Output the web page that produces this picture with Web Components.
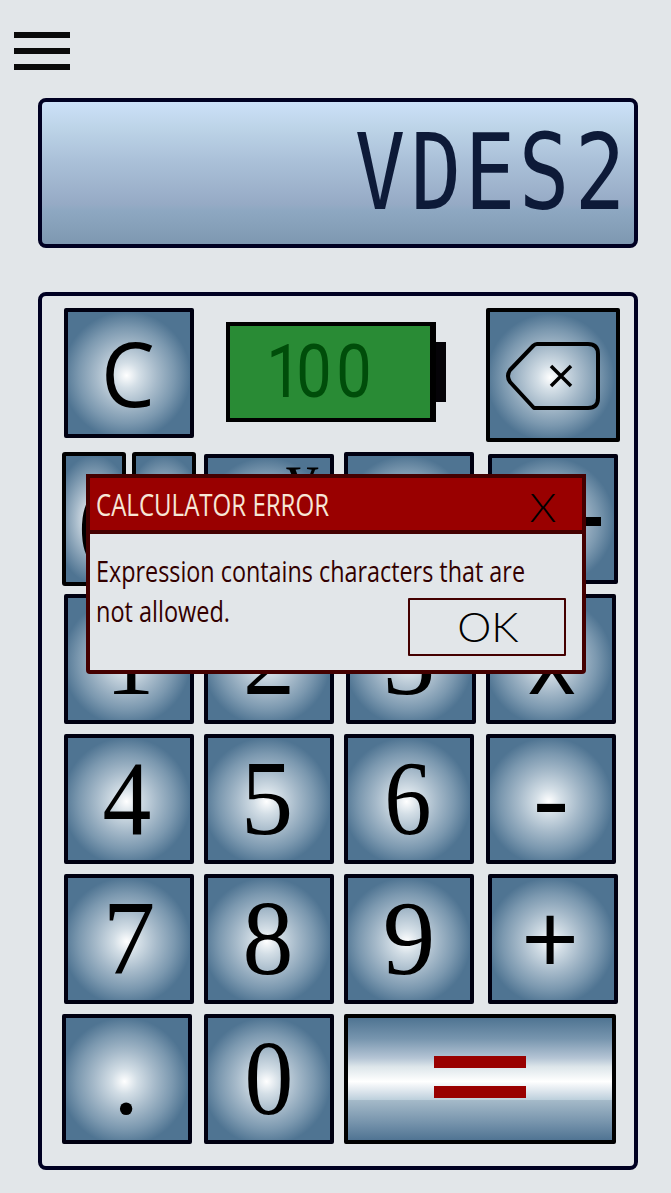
<!DOCTYPE html>
<html lang="en"><head><meta charset="utf-8"><title>Calculator</title>
<style>html,body{margin:0;background:#e2e6e9}body{width:671px;height:1193px;overflow:hidden}</style></head>
<body><calc-app></calc-app>
<script>
const define=(name,html,init)=>customElements.define(name,class extends HTMLElement{
  constructor(){super();const t=document.createElement('template');t.innerHTML=html;
    this.attachShadow({mode:'open'}).append(t.content.cloneNode(true));}
  connectedCallback(){if(init)init(this,this.shadowRoot);}
});

define('menu-button',`<style>:host{display:flex;flex-direction:column;gap:10px;width:56px}i{height:6px;background:#0a0a0a}</style><i></i><i></i><i></i>`);

/* A line of text fitted to a fixed run of space; x may list one centre per character. */
define('fit-text',`<style>:host{display:block}svg{display:block;overflow:visible}text{white-space:pre}</style><svg><text></text></svg>`,(el,r)=>{
  const a=n=>el.getAttribute(n),svg=r.querySelector('svg'),t=r.querySelector('text');
  svg.setAttribute('width',a('w'));svg.setAttribute('height',a('h'));
  const sx=+(a('sx')||1);
  t.textContent=a('text');
  t.setAttribute('x',(a('x')||'0').split(' ').map(v=>v/sx).join(' '));
  t.setAttribute('y',a('y'));
  t.setAttribute('transform',`scale(${sx} 1)`);
  if(a('len')){t.setAttribute('textLength',a('len'));t.setAttribute('lengthAdjust','spacingAndGlyphs');}
  else t.setAttribute('text-anchor','middle');
  t.setAttribute('font-size',a('size'));
  t.setAttribute('font-family',a('font'));
  t.setAttribute('font-weight',a('weight')||400);
  t.setAttribute('fill',a('fill')||'#000');
});

define('lcd-screen',`<style>:host{display:block;box-sizing:border-box;width:600px;height:150px;border:4px solid #000022;border-radius:8px;
background:linear-gradient(#cce1f8 0,#bdd4e8 18%,#aac0d8 42%,#96aac5 72%,#8ea8c2 76%,#7e98b1 100%)}</style><slot></slot>`);

define('battery-gauge',`<style>:host{display:flex;align-items:center;width:220px;height:100px}
.body{box-sizing:border-box;width:210px;height:100px;border:4px solid #000;border-right-width:6px;background:#298b35}
.cap{width:10px;height:60px;background:#050307}</style><div class="body"><slot></slot></div><div class="cap"></div>`);

define('calc-key',`<style>:host{display:block;box-sizing:border-box;flex:none;width:130px;height:130px;border:4px solid #000011;border-radius:2px;
background:radial-gradient(circle 64px at 48% 52%,#fff 0,#d3dee6 20%,#a5b9c9 48%,#7b98af 75%,#4f7492 100%)}
:host([kind=big]){width:134px;height:134px;border-color:#000}
:host([kind=half]){width:64px;height:134px;border-color:#000;border-radius:3px;background:radial-gradient(ellipse 40px 64px at 50% 50%,#fff 0,#a5b9c9 48%,#4f7492 100%)}
:host([kind=equals]){width:272px;border-color:#000;background:linear-gradient(#4f7492 0,#7795ae 17%,#b5c5d5 33%,#dde6ea 40%,#fff 52%,#d4dfe8 62%,#bdd0dc 67%,#a5bac9 67.3%,#7895ad 85%,#507493 100%)}
</style><slot></slot>`);

define('digit-key',`<style>:host{display:block;flex:none}</style><calc-key></calc-key>`,(el,r)=>{
  const f=document.createElement('fit-text');
  const opts={w:122,h:122,y:96,size:105,font:'Liberation Serif, serif'};
  for(const n in opts)f.setAttribute(n,opts[n]);
  for(const n of ['text','x','sx'])if(el.hasAttribute(n))f.setAttribute(n,el.getAttribute(n));
  r.querySelector('calc-key').append(f);
});

define('error-dialog',`<style>:host{display:flex;flex-direction:column;box-sizing:border-box;width:500px;height:200px;border:4px solid #440000;border-radius:0 0 4px 4px;background:#e2e6e9}
header{display:flex;justify-content:space-between;box-sizing:border-box;height:56px;flex:none;background:#990000;border-bottom:4px solid #440000;padding:0 22px 0 6px}
main{padding:22px 16px 0 6px}
.ok{box-sizing:border-box;width:158px;height:58px;border:2px solid #440000;border-radius:1px;margin:-30px 0 0 auto}</style>
<header><fit-text w="233" h="52" x="0" y="38" len="233" text="CALCULATOR ERROR" size="30.5" weight="500" font="Open Sans, sans-serif" fill="#f7e6d6"></fit-text>
<fit-text w="36" h="52" x="19" y="44" sx="1.1" text="X" size="39" font="Lato, sans-serif" weight="300"></fit-text></header>
<main><fit-text w="430" h="40" x="0" y="26" len="429" text="Expression contains characters that are" size="30" weight="500" font="Open Sans, sans-serif" fill="#330000"></fit-text>
<fit-text w="134" h="32" x="0" y="26" len="134" text="not allowed." size="30" weight="500" font="Open Sans, sans-serif" fill="#330000"></fit-text>
<div class="ok"><fit-text w="154" h="54" x="78" y="42" sx="1.05" text="OK" size="41" font="Lato, sans-serif" weight="300"></fit-text></div></main>`);

define('calc-app',`<style>:host{display:block;position:relative;box-sizing:border-box;width:671px;height:1193px;background:#e2e6e9;padding:32px 0 0 14px}
lcd-screen{margin:28px 0 0 24px}
.panel{box-sizing:border-box;width:600px;height:878px;margin:44px 0 0 24px;border:4px solid #000022;border-radius:8px;padding:12px 0 0 20px}
.row{display:flex;height:140px;padding-left:2px;gap:10px;align-items:flex-start}
.r1{height:144px;gap:0}.r1 battery-gauge{margin:14px 40px 0 32px}
.r2{height:142px;padding-left:0;gap:0}.low{margin-top:2px}
error-dialog{position:absolute;left:86px;top:474px}
svg{display:block}</style>
<menu-button></menu-button>
<lcd-screen><fit-text w="592" h="142" sx=".8" x="338 394 448 502 558" y="107" text="VDES2" size="105" font="DejaVu Sans Mono, monospace" fill="#0d1a38"></fit-text></lcd-screen>
<section class="panel">
<div class="row r1"><calc-key><fit-text w="122" h="122" x="60" y="94.5" sx=".95" text="C" size="90" weight="500" font="Open Sans, sans-serif"></fit-text></calc-key>
<battery-gauge><fit-text w="200" h="92" sx=".84" x="54 84 124" y="71" text="100" size="75" font="Roboto, sans-serif" fill="#004d0a"></fit-text></battery-gauge>
<calc-key kind="big"><svg width="126" height="126" fill="none" stroke="#000" stroke-width="4"><path d="M47 32H98Q108 32 108 42V86Q108 96 98 96H44L20 70Q16 64 20 58L43 34Q45 32 47 32Z" stroke-linejoin="round"/><path d="M61 54L81 74M81 54L61 74" stroke-width="3.5"/></svg></calc-key></div>
<div class="row r2"><calc-key kind="half"><fit-text w="56" h="126" x="29" y="99" text="(" size="106" font="Liberation Serif, serif"></fit-text></calc-key>
<calc-key kind="half" style="margin-left:6px"></calc-key>
<calc-key class="low" style="margin-left:8px"><fit-text w="122" h="122" x="94" y="40" text="y" size="66" font="Liberation Serif, serif"></fit-text></calc-key>
<calc-key style="margin-left:10px"></calc-key>
<calc-key class="low" style="margin-left:14px"><svg width="122" height="122"><path d="M13 59H109V68H13z"/></svg></calc-key></div>
<div class="row"><digit-key text="1" x="62" sx=".93"></digit-key><digit-key text="2" x="61"></digit-key><digit-key text="3" x="59" style="margin-left:2px"></digit-key>
<calc-key style="margin-left:0"><fit-text w="122" h="122" x="62" y="96" sx=".95" text="x" size="98" weight="500" font="Open Sans, sans-serif"></fit-text></calc-key></div>
<div class="row"><digit-key text="4" x="59" sx=".93"></digit-key><digit-key text="5" x="59"></digit-key><digit-key text="6" x="60" sx=".9"></digit-key>
<calc-key style="margin-left:2px"><fit-text w="122" h="122" x="61" y="98" sx="1.1" text="-" size="104" font="Liberation Sans, sans-serif"></fit-text></calc-key></div>
<div class="row"><digit-key text="7" x="61"></digit-key><digit-key text="8" x="60" sx=".97"></digit-key><digit-key text="9" x="61"></digit-key>
<calc-key style="margin-left:4px"><fit-text w="122" h="122" x="58" y="95" text="+" size="98" font="Liberation Sans, sans-serif"></fit-text></calc-key></div>
<div class="row" style="padding-left:0"><digit-key text="." x="60"></digit-key><digit-key text="0" x="61" sx=".93" style="margin-left:2px"></digit-key>
<calc-key kind="equals"><svg width="264" height="122" fill="#990000"><path d="M86 38h92v12h-92zM86 68h92v12h-92z"/></svg></calc-key></div>
</section>
<error-dialog></error-dialog>`);
</script></body></html>
